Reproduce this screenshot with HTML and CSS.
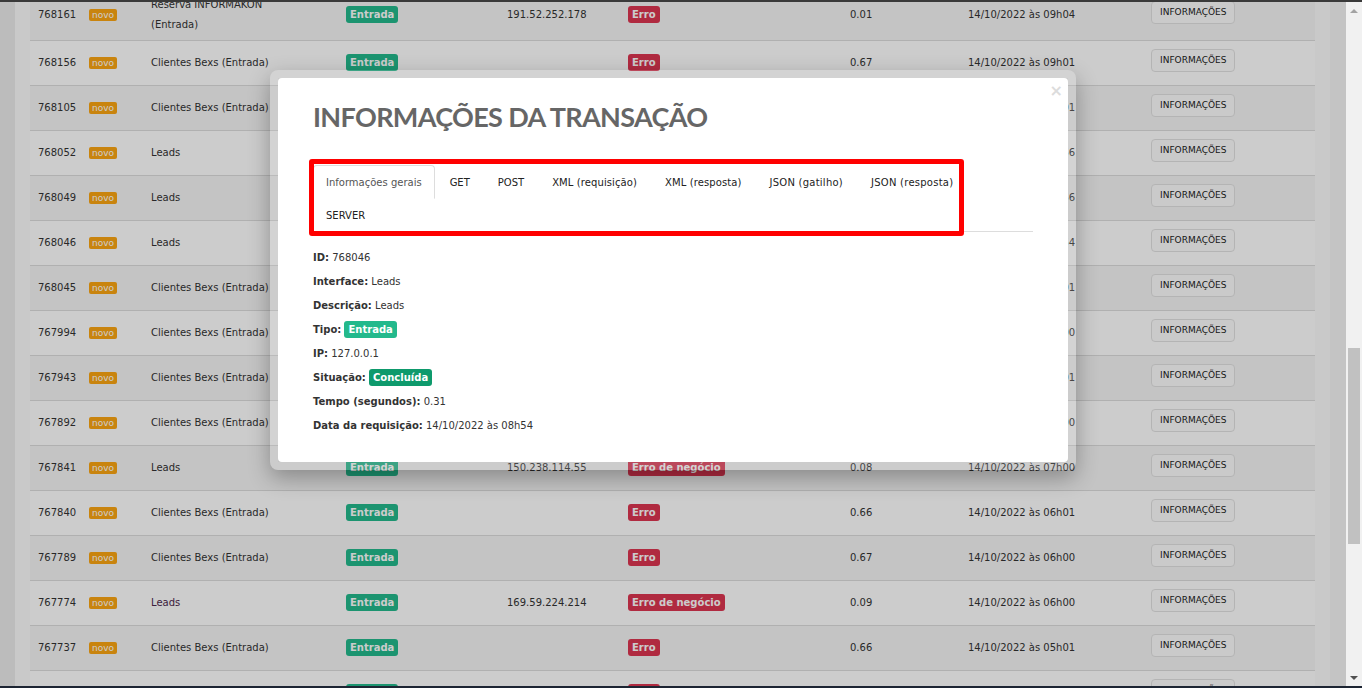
FILE: index.html
```html
<!DOCTYPE html>
<html lang="pt-BR">
<head>
<meta charset="utf-8">
<title>Transações</title>
<link rel="stylesheet" href="styles.css">
</head>
<body>
<div class="frame-top"></div>
<div class="viewport">
  <div class="main">
    <div class="gutter-left"></div>
    <div class="page">
      <table class="grid">
        <colgroup>
          <col class="c-id"><col class="c-new"><col class="c-desc"><col class="c-type"><col class="c-ip"><col class="c-sit"><col class="c-time"><col class="c-date"><col class="c-act">
        </colgroup>
        <tbody>
          <tr><td>768161</td><td><span class="novo">novo</span></td><td class="desc">Reserva INFORMAKON (Entrada)</td><td><span class="badge ok">Entrada</span></td><td>191.52.252.178</td><td><span class="badge err">Erro</span></td><td>0.01</td><td>14/10/2022 às 09h04</td><td class="act"><button class="btn">INFORMAÇÕES</button></td></tr>
          <tr><td>768156</td><td><span class="novo">novo</span></td><td class="desc">Clientes Bexs (Entrada)</td><td><span class="badge ok">Entrada</span></td><td></td><td><span class="badge err">Erro</span></td><td>0.67</td><td>14/10/2022 às 09h01</td><td class="act"><button class="btn">INFORMAÇÕES</button></td></tr>
          <tr><td>768105</td><td><span class="novo">novo</span></td><td class="desc">Clientes Bexs (Entrada)</td><td><span class="badge ok">Entrada</span></td><td></td><td><span class="badge err">Erro</span></td><td>0.66</td><td>14/10/2022 às 09h01</td><td class="act"><button class="btn">INFORMAÇÕES</button></td></tr>
          <tr><td>768052</td><td><span class="novo">novo</span></td><td class="desc">Leads</td><td><span class="badge ok">Entrada</span></td><td>127.0.0.1</td><td><span class="badge done">Concluída</span></td><td>0.29</td><td>14/10/2022 às 08h56</td><td class="act"><button class="btn">INFORMAÇÕES</button></td></tr>
          <tr><td>768049</td><td><span class="novo">novo</span></td><td class="desc">Leads</td><td><span class="badge ok">Entrada</span></td><td>127.0.0.1</td><td><span class="badge done">Concluída</span></td><td>0.30</td><td>14/10/2022 às 08h56</td><td class="act"><button class="btn">INFORMAÇÕES</button></td></tr>
          <tr><td>768046</td><td><span class="novo">novo</span></td><td class="desc">Leads</td><td><span class="badge ok">Entrada</span></td><td>127.0.0.1</td><td><span class="badge done">Concluída</span></td><td>0.31</td><td>14/10/2022 às 08h54</td><td class="act"><button class="btn">INFORMAÇÕES</button></td></tr>
          <tr><td>768045</td><td><span class="novo">novo</span></td><td class="desc">Clientes Bexs (Entrada)</td><td><span class="badge ok">Entrada</span></td><td></td><td><span class="badge err">Erro</span></td><td>0.66</td><td>14/10/2022 às 08h01</td><td class="act"><button class="btn">INFORMAÇÕES</button></td></tr>
          <tr><td>767994</td><td><span class="novo">novo</span></td><td class="desc">Clientes Bexs (Entrada)</td><td><span class="badge ok">Entrada</span></td><td></td><td><span class="badge err">Erro</span></td><td>0.67</td><td>14/10/2022 às 08h00</td><td class="act"><button class="btn">INFORMAÇÕES</button></td></tr>
          <tr><td>767943</td><td><span class="novo">novo</span></td><td class="desc">Clientes Bexs (Entrada)</td><td><span class="badge ok">Entrada</span></td><td></td><td><span class="badge err">Erro</span></td><td>0.66</td><td>14/10/2022 às 07h01</td><td class="act"><button class="btn">INFORMAÇÕES</button></td></tr>
          <tr><td>767892</td><td><span class="novo">novo</span></td><td class="desc">Clientes Bexs (Entrada)</td><td><span class="badge ok">Entrada</span></td><td></td><td><span class="badge err">Erro</span></td><td>0.67</td><td>14/10/2022 às 07h00</td><td class="act"><button class="btn">INFORMAÇÕES</button></td></tr>
          <tr><td>767841</td><td><span class="novo">novo</span></td><td class="desc">Leads</td><td><span class="badge ok">Entrada</span></td><td>150.238.114.55</td><td><span class="badge err">Erro de negócio</span></td><td>0.08</td><td>14/10/2022 às 07h00</td><td class="act"><button class="btn">INFORMAÇÕES</button></td></tr>
          <tr><td>767840</td><td><span class="novo">novo</span></td><td class="desc">Clientes Bexs (Entrada)</td><td><span class="badge ok">Entrada</span></td><td></td><td><span class="badge err">Erro</span></td><td>0.66</td><td>14/10/2022 às 06h01</td><td class="act"><button class="btn">INFORMAÇÕES</button></td></tr>
          <tr><td>767789</td><td><span class="novo">novo</span></td><td class="desc">Clientes Bexs (Entrada)</td><td><span class="badge ok">Entrada</span></td><td></td><td><span class="badge err">Erro</span></td><td>0.67</td><td>14/10/2022 às 06h00</td><td class="act"><button class="btn">INFORMAÇÕES</button></td></tr>
          <tr><td>767774</td><td><span class="novo">novo</span></td><td class="desc visited">Leads</td><td><span class="badge ok">Entrada</span></td><td>169.59.224.214</td><td><span class="badge err">Erro de negócio</span></td><td>0.09</td><td>14/10/2022 às 06h00</td><td class="act"><button class="btn">INFORMAÇÕES</button></td></tr>
          <tr><td>767737</td><td><span class="novo">novo</span></td><td class="desc">Clientes Bexs (Entrada)</td><td><span class="badge ok">Entrada</span></td><td></td><td><span class="badge err">Erro</span></td><td>0.66</td><td>14/10/2022 às 05h01</td><td class="act"><button class="btn">INFORMAÇÕES</button></td></tr>
          <tr><td>767736</td><td><span class="novo">novo</span></td><td class="desc">Clientes Bexs (Entrada)</td><td><span class="badge ok">Entrada</span></td><td></td><td><span class="badge err">Erro</span></td><td>0.67</td><td>14/10/2022 às 05h00</td><td class="act"><button class="btn">INFORMAÇÕES</button></td></tr>
        </tbody>
      </table>
    </div>
    <div class="gutter-right"></div>

    <div class="overlay">
      <div class="modal">
        <div class="modal-inner">
          <span class="close">×</span>
          <h2 class="modal-title">INFORMAÇÕES DA TRANSAÇÃO</h2>
          <ul class="tabs">
            <li class="active"><a href="#">Informações gerais</a></li>
            <li><a href="#">GET</a></li>
            <li><a href="#">POST</a></li>
            <li><a href="#" class="xml">XML (requisição)</a></li>
            <li><a href="#" class="xml">XML (resposta)</a></li>
            <li><a href="#" class="json">JSON (gatilho)</a></li>
            <li><a href="#" class="json">JSON (resposta)</a></li>
            <li><a href="#">SERVER</a></li>
          </ul>
          <div class="tab-content">
            <div class="info"><b>ID:</b> 768046</div>
            <div class="info"><b>Interface:</b> Leads</div>
            <div class="info"><b>Descrição:</b> Leads</div>
            <div class="info"><b>Tipo:</b> <span class="badge ok">Entrada</span></div>
            <div class="info"><b>IP:</b> 127.0.0.1</div>
            <div class="info"><b>Situação:</b> <span class="badge done">Concluída</span></div>
            <div class="info"><b>Tempo (segundos):</b> 0.31</div>
            <div class="info"><b>Data da requisição:</b> 14/10/2022 às 08h54</div>
          </div>
          <div class="annot"></div>
        </div>
      </div>
    </div>
  </div>
  <div class="scrollbar">
    <div class="sb-up"></div>
    <div class="sb-thumb"></div>
    <div class="sb-down"></div>
  </div>
</div>
<div class="frame-bottom"></div>
</body>
</html>
```

FILE: styles.css
```css
* { box-sizing: border-box; }

html, body { margin: 0; padding: 0; }

body {
  height: 688px;
  overflow: hidden;
  display: flex;
  flex-direction: column;
  font-family: "DejaVu Sans", Verdana, sans-serif;
  font-size: 10px;
  color: #333;
  background: #fff;
}

.frame-top { flex: none; height: 2px; background: #3a3a3a; }
.frame-bottom { flex: none; height: 2px; background: #1d2533; }

.viewport { flex: 1; min-height: 0; display: flex; overflow: hidden; }

.main { flex: 1; position: relative; overflow: hidden; display: flex; }

.gutter-left { flex: none; width: 15px; background: #ececec; }
.gutter-right { flex: none; width: 16px; background: #f5f5f5; }

.page {
  flex: 1;
  margin-top: -12px;
  padding: 0 15px;
  background: #fcfcfc;
}

.grid {
  width: 100%;
  table-layout: fixed;
  border-collapse: separate;
  border-spacing: 0;
}

.c-id { width: 51px; }
.c-new { width: 62px; }
.c-desc { width: 195px; }
.c-type { width: 161px; }
.c-ip { width: 121px; }
.c-sit { width: 222px; }
.c-time { width: 118px; }
.c-date { width: 183px; }

.grid td {
  height: 45px;
  padding: 5px 8px;
  line-height: 20px;
  vertical-align: middle;
  border-bottom: 1px solid #ddd;
  white-space: nowrap;
  background: #fff;
}

.grid tr:nth-child(odd) td { background: #f6f6f6; }

.grid td.desc { white-space: normal; padding-right: 37px; }
.grid td.visited { color: #4d2a4d; }

.novo {
  display: inline-block;
  font-size: 9px;
  line-height: 12px;
  padding: 0 3px;
  color: #fff;
  background: #fca512;
  border-radius: 2px;
}

.badge {
  display: inline-block;
  font-weight: bold;
  font-size: 10px;
  line-height: 13px;
  padding: 2px 4px;
  color: #fff;
  border-radius: 3px;
}
.badge.ok { background: #23b98c; }
.badge.err { background: #dd3550; }
.badge.done { background: #0e9a6c; }

.btn {
  display: inline-block;
  height: 23px;
  margin-bottom: 5px;
  padding: 0 8px;
  font-family: "DejaVu Sans", Verdana, sans-serif;
  font-size: 9px;
  line-height: 21px;
  color: #222;
  background: #fdfdfd;
  border: 1px solid #e2e2e2;
  border-radius: 4px;
}

/* modal overlay */
.overlay {
  position: absolute;
  top: 0; left: 0; right: 0; bottom: 0;
  background: rgba(0, 0, 0, 0.2);
  display: flex;
  justify-content: center;
  align-items: flex-start;
  padding-top: 68px;
}

.modal {
  width: 806px;
  border: 8px solid rgba(255, 255, 255, 0.14);
  border-radius: 8px;
  box-shadow: 0 8px 22px rgba(0, 0, 0, 0.3);
}

.modal-inner {
  position: relative;
  background: #fff;
  border-radius: 4px;
  padding: 22px 35px 24px;
}

.close {
  position: absolute;
  top: 3px;
  right: 5px;
  font-size: 16px;
  font-weight: bold;
  line-height: 20px;
  color: #dcdcdc;
}

.modal-title {
  margin: 0 0 31px;
  font-family: Lato, "DejaVu Sans", sans-serif;
  font-weight: 700;
  font-size: 27px;
  letter-spacing: -0.65px;
  line-height: 34px;
  color: #666;
}

.tabs {
  list-style: none;
  margin: 0;
  padding: 0;
  display: flex;
  flex-wrap: wrap;
  border-bottom: 1px solid #ddd;
}

.tabs li { margin: 0 2px -1px 0; }

.tabs a {
  display: block;
  padding: 10px 12px 9px;
  line-height: 13px;
  border: 1px solid transparent;
  border-radius: 4px 4px 0 0;
  color: #222;
  text-decoration: none;
}

.tabs a.xml { letter-spacing: 0.1px; }
.tabs a.json { letter-spacing: 0.25px; }

.tabs li.active a {
  color: #555;
  background: #fff;
  border-color: #ddd #ddd transparent;
}

.tab-content { padding-top: 14px; }

.info { height: 24px; line-height: 24px; color: #333; }
.info b { color: #333; }

.annot {
  position: absolute;
  left: 31px;
  top: 81px;
  width: 655px;
  height: 77px;
  border: 5px solid #ff0000;
  border-radius: 3px;
}

/* browser scrollbar */
.scrollbar {
  flex: none;
  width: 16px;
  background: #f1f1f1;
  display: flex;
  flex-direction: column;
  align-items: center;
}

.sb-up {
  margin-top: 7px;
  width: 0; height: 0;
  border-left: 4px solid transparent;
  border-right: 4px solid transparent;
  border-bottom: 4px solid #a3a3a3;
}

.sb-thumb {
  margin-top: 335px;
  width: 12px;
  height: 196px;
  background: #c1c1c1;
}

.sb-down {
  margin-top: auto;
  margin-bottom: 6px;
  width: 0; height: 0;
  border-left: 4px solid transparent;
  border-right: 4px solid transparent;
  border-top: 4px solid #505050;
}
```
